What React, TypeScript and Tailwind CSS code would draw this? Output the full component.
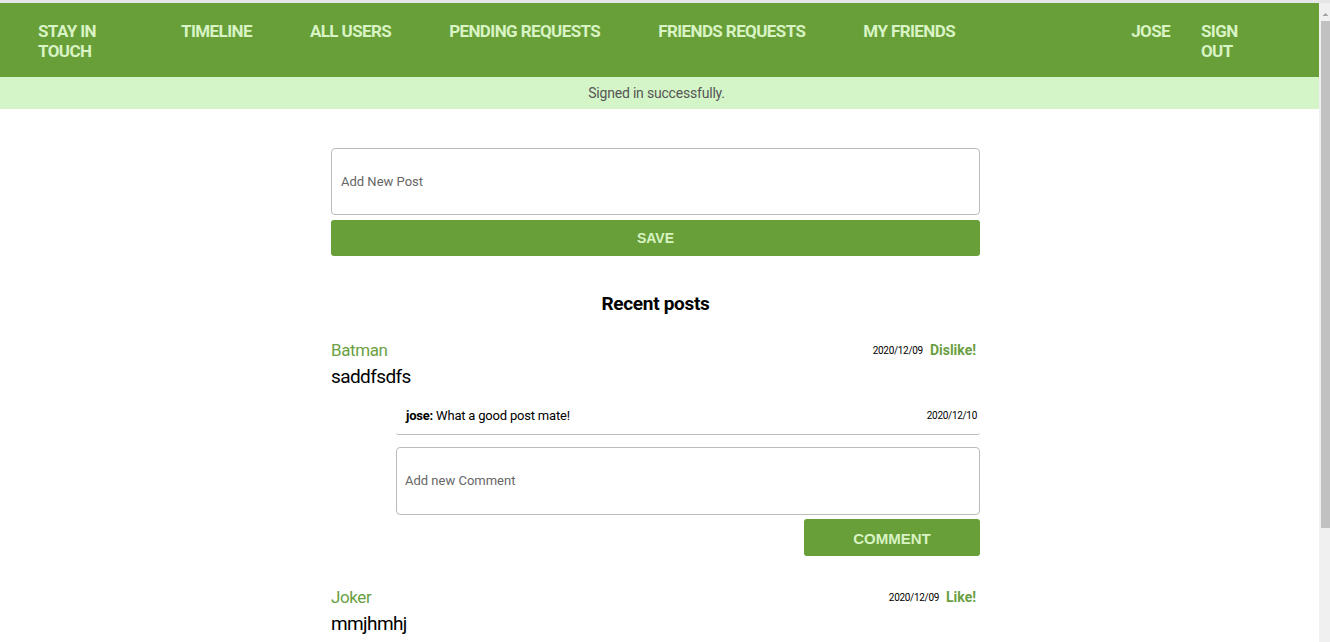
import React from 'react';

const navLinks = ['TIMELINE', 'ALL USERS', 'PENDING REQUESTS', 'FRIENDS REQUESTS', 'MY FRIENDS'];

function Post({ author, body, date, action, children }: { author: string; body: string; date: string; action: string; children?: React.ReactNode }) {
  return (
    <div className="mb-[30px]">
      <div className="flex items-center justify-between">
        <span className="text-[17px] leading-[22px] tracking-[-0.4px] text-[#6a9f43]">{author}</span>
        <div className="flex items-center gap-[7px] pr-[4px]">
          <span className="text-[10px] tracking-[-0.3px] text-black">{date}</span>
          <span className="text-[14px] font-bold text-[#6a9f43]">{action}</span>
        </div>
      </div>
      <p className="mt-[3px] text-[19px] leading-[26px] tracking-[-0.6px] text-black">{body}</p>
      {children}
    </div>
  );
}

export default function App() {
  return (
    <div className="h-[642px] overflow-hidden flex flex-col bg-white font-['Roboto',sans-serif]">
      <div className="h-[3px] bg-[#e6e6e6] shrink-0" />
      <div className="flex flex-1 min-h-0">
        <div className="flex-1 min-w-0">
          {/* navbar */}
          <nav className="bg-[#689f38] h-[74px] flex items-start pt-[18px] text-[#d8f3c4] font-bold text-[17px] leading-[20px] tracking-[-0.6px]">
            <a className="ml-[38px] w-[90px]">STAY IN TOUCH</a>
            <div className="flex gap-[58px] ml-[53px]">
              {navLinks.map((l) => (
                <a key={l}>{l}</a>
              ))}
            </div>
            <a className="ml-auto">JOSE</a>
            <a className="ml-[31px] w-[40px] mr-[78px]">SIGN OUT</a>
          </nav>

          {/* flash */}
          <div className="bg-[#d4f5c8] h-[32px] flex items-center justify-center text-[14px] tracking-[-0.2px] text-[#555] pr-[6px]">
            Signed in successfully.
          </div>

          <main className="w-[649px] ml-[331px] pt-[39px]">
            <div className="h-[67px] border border-[#bbb] rounded-[4px] flex items-center px-[9px] text-[13px] text-[#666]">
              Add New Post
            </div>
            <button className="mt-[5px] w-full h-[36px] rounded-[3px] bg-[#689f38] text-[#d8f3c4] font-['Liberation_Sans',sans-serif] font-bold text-[14px]">
              SAVE
            </button>

            <h2 className="mt-[36px] mb-[23px] text-center text-[19px] font-bold text-black leading-[24px] tracking-[-0.3px]">Recent posts</h2>

            <Post author="Batman" body="saddfsdfs" date="2020/12/09" action="Dislike!">
              <div className="ml-[65px] mt-[11px]">
                <div className="flex items-center justify-between h-[34px] pb-[4px] pl-[10px] pr-[3px] border-b border-[#bbb] rounded-b-[3px] text-[13px] tracking-[-0.2px]">
                  <span className="text-black">
                    <b>jose:</b> What a good post mate!
                  </span>
                  <span className="text-[10px] tracking-[-0.3px] text-black">2020/12/10</span>
                </div>
                <div className="mt-[12px] h-[68px] border border-[#bbb] rounded-[4px] flex items-center px-[8px] text-[13px] text-[#666]">
                  Add new Comment
                </div>
                <div className="flex justify-end mt-[4px]">
                  <button className="w-[176px] h-[37px] pt-[3px] rounded-[3px] bg-[#689f38] text-[#d8f3c4] font-['Liberation_Sans',sans-serif] font-bold text-[15px]">
                    COMMENT
                  </button>
                </div>
              </div>
            </Post>

            <Post author="Joker" body="mmjhmhj" date="2020/12/09" action="Like!" />
          </main>
        </div>

        {/* scrollbar */}
        <div className="w-[11px] shrink-0 bg-[#f0f0f0] flex flex-col items-end">
          <svg width="9" height="18" viewBox="0 0 9 18" className="shrink-0">
            <path d="M1.5 13 L4.5 10 L7.5 13 Z" fill="#a3a3a3" />
          </svg>
          <div className="w-[9px] h-[507px] bg-[#c1c1c1]" />
        </div>
      </div>
    </div>
  );
}
